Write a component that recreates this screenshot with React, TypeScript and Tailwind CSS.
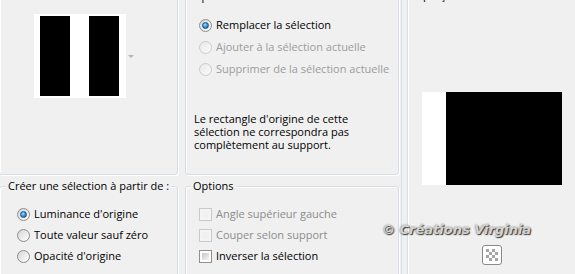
import React from "react";

type Opt = { label: string; on?: boolean; disabled?: boolean };

function Radio({ on, disabled }: { on?: boolean; disabled?: boolean }) {
  return (
    <span
      className={`relative inline-flex w-[13px] h-[13px] shrink-0 items-center justify-center rounded-full border ${
        disabled
          ? "border-[#c9cbcd] bg-[linear-gradient(135deg,#e8e8e8,#fbfbfb)]"
          : "border-[#8a8c8e] bg-[linear-gradient(135deg,#d6d6d6,#ffffff)]"
      }`}
    >
      {on && (
        <span className="w-[7px] h-[7px] rounded-full border border-[#1c4f83] bg-[radial-gradient(circle_at_40%_35%,#aee0ff_0%,#3c9be0_45%,#0f4c8c_100%)]" />
      )}
    </span>
  );
}

function Check({ disabled }: { disabled?: boolean }) {
  return (
    <span
      className={`inline-flex w-[13px] h-[13px] shrink-0 p-[2px] border ${
        disabled ? "border-[#c6cacd] bg-[#f4f4f4]" : "border-[#8e8f8f] bg-white"
      }`}
    >
      <span
        className={`flex-1 ${
          disabled
            ? "bg-[#f1f1f1]"
            : "bg-[linear-gradient(135deg,#c8c8c8,#f4f4f4)]"
        }`}
      />
    </span>
  );
}

// win7-ish etched group frame
function Group({
  title,
  titleLeft,
  className,
  children,
}: {
  title?: string;
  titleLeft?: string;
  className?: string;
  children?: React.ReactNode;
}) {
  return (
    <div
      className={`relative shrink-0 rounded-[3px] border border-[#d5dfe5] shadow-[inset_1px_1px_0_#fff,1px_1px_0_#fff] ${
        className ?? ""
      }`}
    >
      {title && (
        <span
          className={`absolute -top-[9px] ${titleLeft} px-[2px] bg-[#f0f0f0] leading-[15px] whitespace-nowrap`}
        >
          {title}
        </span>
      )}
      {children}
    </div>
  );
}

const ops: Opt[] = [
  { label: "Remplacer la sélection", on: true },
  { label: "Ajouter à la sélection actuelle", disabled: true },
  { label: "Supprimer de la sélection actuelle", disabled: true },
];

const sources: Opt[] = [
  { label: "Luminance d'origine", on: true },
  { label: "Toute valeur sauf zéro" },
  { label: "Opacité d'origine" },
];

const options: Opt[] = [
  { label: "Angle supérieur gauche", disabled: true },
  { label: "Couper selon support", disabled: true },
  { label: "Inverser la sélection" },
];

export default function App() {
  return (
    <div className="relative w-[575px] h-[274px] overflow-hidden bg-[#f0f0f0] flex text-[11px] text-black font-['Open_Sans',sans-serif]">
      {/* left: the four group boxes */}
      <div className="flex flex-col -ml-px -mt-[4px] w-[400px] shrink-0">
        <div className="flex gap-[7px] h-[179px] shrink-0">
          <Group className="w-[179px] h-full">
            <div className="flex items-center ml-[34px] mt-[17px]">
              <div className="flex w-[92px] h-[84px] bg-white pl-[6px] pt-[2px] gap-[19px]">
                <div className="w-[30px] h-[80px] bg-black" />
                <div className="w-[30px] h-[80px] bg-black" />
              </div>
              <span className="ml-[2px] w-0 h-0 border-x-[3px] border-t-[3px] border-x-transparent border-t-[#b4b4b4]" />
            </div>
          </Group>

          <Group title="Opération" titleLeft="left-[5px]" className="w-[214px] h-full">
            <div className="pt-[17px] pl-[13px]">
              {ops.map((o) => (
                <div key={o.label} className="flex items-center gap-[4px] h-[22px]">
                  <Radio on={o.on} disabled={o.disabled} />
                  <span className={o.disabled ? "text-[#9c9c9c]" : ""}>{o.label}</span>
                </div>
              ))}
            </div>
            <p className="mt-[32px] pl-[8px] leading-[13px]">
              Le rectangle d'origine de cette
              <br />
              sélection ne correspondra pas
              <br />
              complètement au support.
            </p>
          </Group>
        </div>

        <div className="flex gap-[7px] mt-[11px] h-[120px] shrink-0">
          <Group
            title="Créer une sélection à partir de :"
            titleLeft="left-[6px]"
            className="w-[179px] h-full"
          >
            <div className="pt-[17px] pl-[17px]">
              {sources.map((o) => (
                <div key={o.label} className="flex items-center gap-[4px] h-[21px]">
                  <Radio on={o.on} />
                  <span>{o.label}</span>
                </div>
              ))}
            </div>
          </Group>

          <Group title="Options" titleLeft="left-[5px]" className="w-[214px] h-full">
            <div className="pt-[17px] pl-[13px]">
              {options.map((o) => (
                <div key={o.label} className="flex items-center gap-[4px] h-[21px]">
                  <Check disabled={o.disabled} />
                  <span className={o.disabled ? "text-[#8c8c8c]" : ""}>{o.label}</span>
                </div>
              ))}
            </div>
          </Group>
        </div>
      </div>

      {/* splitter */}
      <div className="w-[2px] shrink-0" />
      <div className="w-[7px] shrink-0 border-x border-[#d5dfe5]" />

      {/* preview */}
      <div className="flex-1 flex flex-col border-l border-white">
        <div className="-mt-[13px] h-[15px] leading-[15px] pl-[7px]">Aperçu :</div>
        <div className="self-center flex mt-[90px] w-[140px] h-[93px] bg-white">
          <div className="ml-[24px] flex-1 bg-black" />
        </div>
        <div className="self-center mt-[60px] w-[20px] h-[20px] rounded-[3px] border border-[#8a8a8a] bg-white p-[3px] grid grid-cols-4">
          {Array.from({ length: 16 }).map((_, i) => (
            <span
              key={i}
              className={(Math.floor(i / 4) + i) % 2 === 0 ? "bg-[#a6a6a6]" : "bg-white"}
            />
          ))}
        </div>
      </div>

      {/* watermark over the dialog */}
      <div className="absolute left-[382px] top-[221px] text-[13px] leading-[18px] font-bold italic text-[#d4d4d4] font-['DejaVu_Sans',sans-serif] [text-shadow:1px_1px_1px_#3a3a3a,0_0_2px_#6a6a6a] whitespace-nowrap">
        © Créations Virginia
      </div>
    </div>
  );
}
